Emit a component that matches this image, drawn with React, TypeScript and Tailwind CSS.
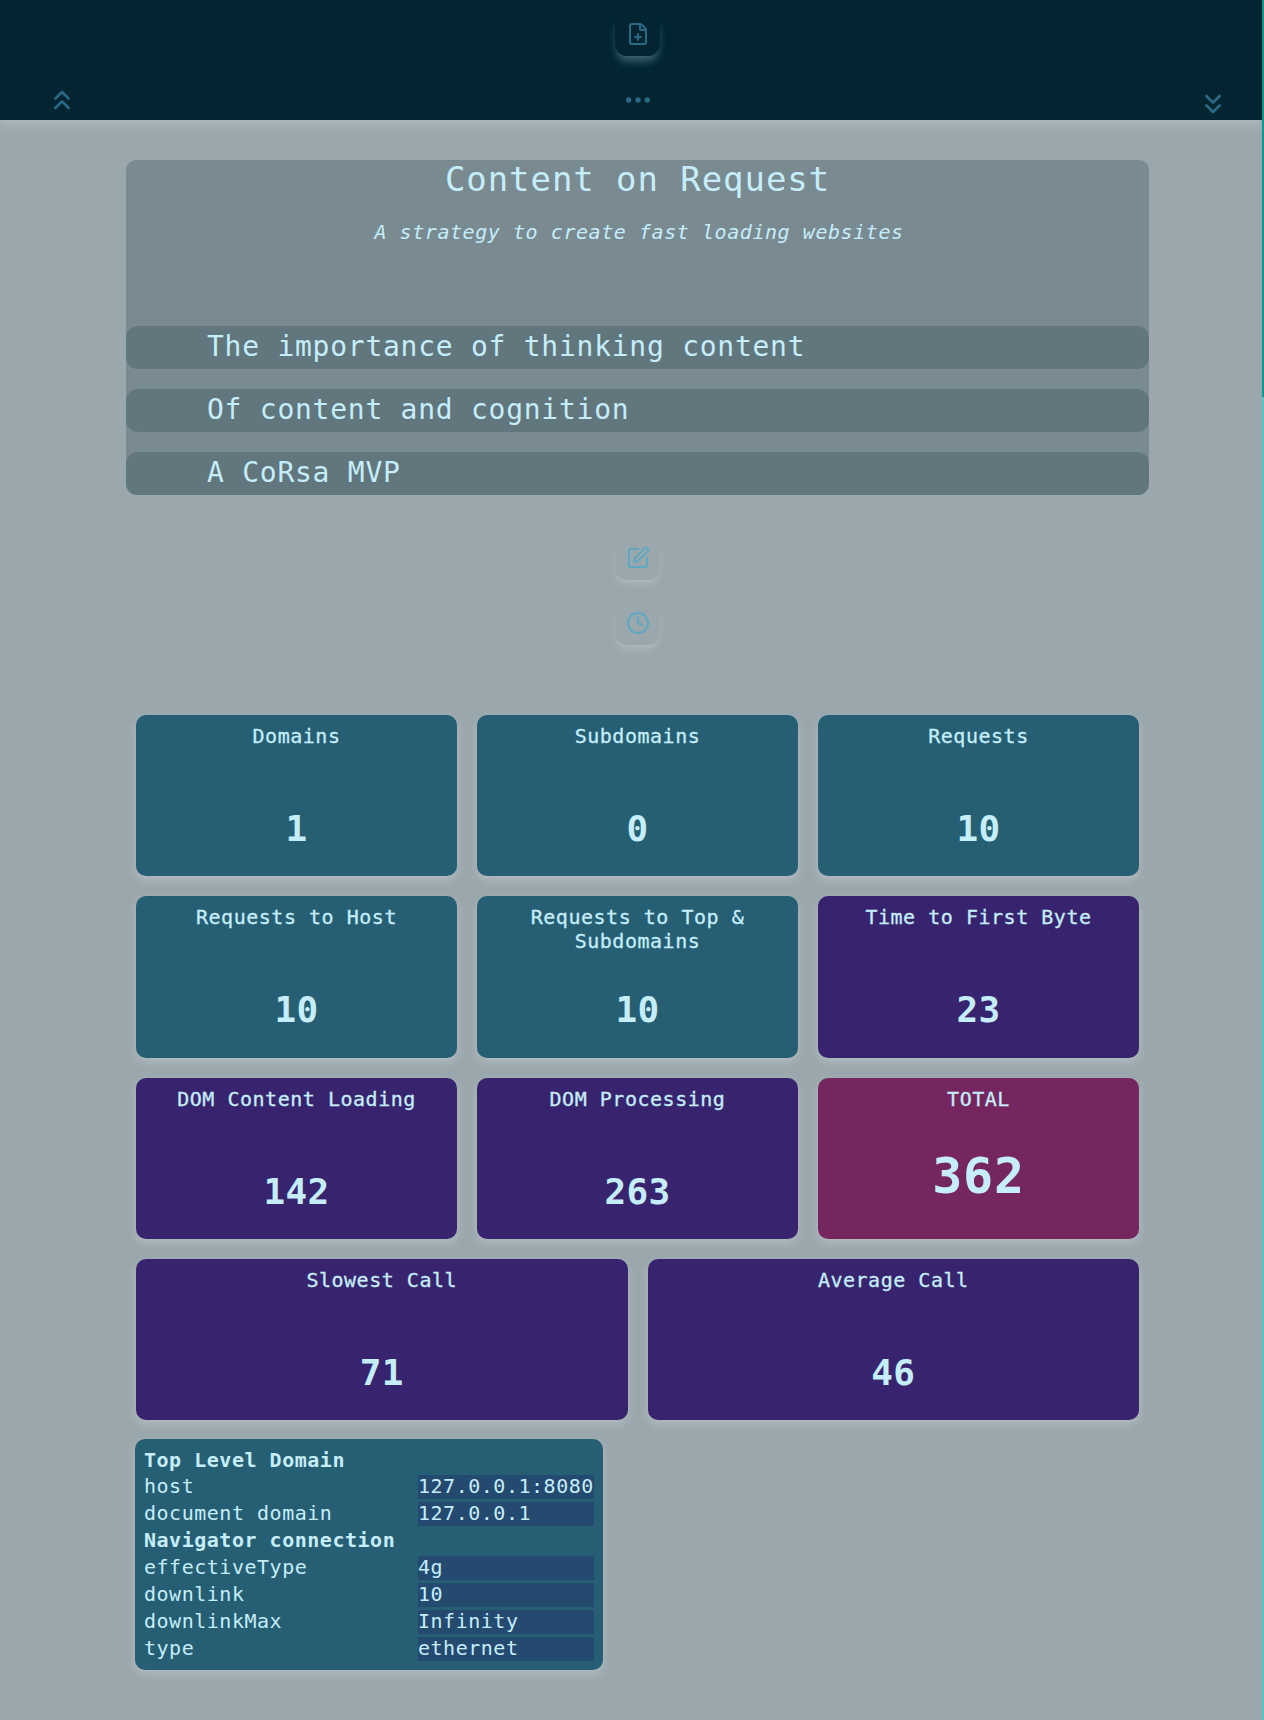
import React from 'react';
import { ChevronsUp, ChevronsDown, Ellipsis, FilePlus, SquarePen, Clock } from 'lucide-react';

const TEAL = 'bg-[#265f73]';
const PURPLE = 'bg-[#38246e]';

const Stat: React.FC<{ label: string; value: string; color?: string; big?: boolean }> = ({ label, value, color = TEAL, big }) => (
  <div className={`h-[161.3px] rounded-[10px] ${color} flex flex-col items-center pt-[9px] px-4 text-center shadow-[0_4px_10px_rgba(255,255,255,0.25)]`}>
    <div className="min-h-12 text-[20px] leading-6 tracking-[0.52px] [-webkit-text-stroke:0.3px_#c5edfb]">{label}</div>
    {big ? (
      <div className="mt-[9px] text-[50px] leading-[64px] font-bold tracking-[0.8px]">{value}</div>
    ) : (
      <div className="mt-[33px] text-[36px] leading-[48px] font-bold tracking-[0.3px]">{value}</div>
    )}
  </div>
);

const GhostButton: React.FC<{ children: React.ReactNode; dark?: boolean }> = ({ children, dark }) => (
  <div className={`w-[45px] h-11 rounded-[12px] flex items-center justify-center ${dark ? 'shadow-[0_7px_8px_-2px_rgba(160,200,210,0.4)] bg-[#022531]' : 'shadow-[0_5px_6px_-1px_rgba(255,255,255,0.2)] bg-[#9aa7ad]'}`}>
    {children}
  </div>
);

const InfoRow: React.FC<{ name: string; value: string }> = ({ name, value }) => (
  <>
    <div className="h-6 leading-[22px]">{name}</div>
    <div className="h-6 leading-[22px] bg-[#254a70]">{value}</div>
  </>
);

export default function App() {
  return (
    <div className="min-h-[1720px] bg-[#9aa7ad] text-[#c5edfb] font-['DejaVu_Sans_Mono','Liberation_Mono',monospace] relative overflow-hidden">
      <header className="h-[120px] bg-[#022531] flex items-start justify-between pl-[46px] pr-[35px] shadow-[0_4px_12px_rgba(255,255,255,0.25)] relative">
        <ChevronsUp className="mt-[84px] w-8 h-8 text-[#2a6a85]" />
        <div className="w-[45px] flex flex-col items-center pt-3">
          <GhostButton dark><FilePlus className="w-6 h-6 text-[#2a6a85]" /></GhostButton>
          <Ellipsis className="mt-7 w-8 h-8 text-[#2a6a85]" />
        </div>
        <ChevronsDown className="mt-[88px] w-8 h-8 text-[#2a6a85]" />
      </header>

      <div className="w-[1023px] ml-[126px] mt-10 flex flex-col items-center">
        <section className="w-full h-[335px] bg-[#7a8a91] rounded-[10px] flex flex-col">
          <h1 className="-mt-px text-center text-[34px] leading-10 tracking-[0.93px]">Content on Request</h1>
          <p className="pl-[3px] text-center italic text-[20px] leading-6 tracking-[0.56px] mt-[21px]">A strategy to create fast loading websites</p>
          <div className="mt-[82px] flex flex-col gap-5">
            {['The importance of thinking content', 'Of content and cognition', 'A CoRsa MVP'].map(t => (
              <div key={t} className="h-[43px] bg-[#61767d] rounded-[12px] pl-[81px] text-[28px] leading-[42px] tracking-[0.74px]">{t}</div>
            ))}
          </div>
        </section>

        <div className="flex flex-col items-center gap-[21px] mt-[41px]">
          <GhostButton><SquarePen className="w-6 h-6 text-[#5fa8c2]" /></GhostButton>
          <GhostButton><Clock className="w-6 h-6 text-[#5fa8c2]" /></GhostButton>
        </div>
      </div>

      <main className="ml-[136px] w-[1003px] mt-[70px] flex flex-col gap-5">
        <div className="grid grid-cols-3 gap-5">
          <Stat label="Domains" value="1" />
          <Stat label="Subdomains" value="0" />
          <Stat label="Requests" value="10" />
          <Stat label="Requests to Host" value="10" />
          <Stat label="Requests to Top & Subdomains" value="10" />
          <Stat label="Time to First Byte" value="23" color={PURPLE} />
          <Stat label="DOM Content Loading" value="142" color={PURPLE} />
          <Stat label="DOM Processing" value="263" color={PURPLE} />
          <Stat label="TOTAL" value="362" color="bg-[#75265e]" big />
        </div>
        <div className="grid grid-cols-2 gap-5">
          <Stat label="Slowest Call" value="71" color={PURPLE} />
          <Stat label="Average Call" value="46" color={PURPLE} />
        </div>
        <div className={`w-[468px] -ml-px -mt-px rounded-[10px] ${TEAL} p-[9px] text-[20px] tracking-[0.52px] shadow-[0_4px_10px_rgba(255,255,255,0.25)]`}>
          <div className="grid grid-cols-[274px_1fr] gap-y-[3px]">
            <div className="col-span-2 h-6 leading-6 font-bold">Top Level Domain</div>
            <InfoRow name="host" value="127.0.0.1:8080" />
            <InfoRow name="document domain" value="127.0.0.1" />
            <div className="col-span-2 h-6 leading-[22px] font-bold">Navigator connection</div>
            <InfoRow name="effectiveType" value="4g" />
            <InfoRow name="downlink" value="10" />
            <InfoRow name="downlinkMax" value="Infinity" />
            <InfoRow name="type" value="ethernet" />
          </div>
        </div>
      </main>

      <div className="absolute top-0 right-0 w-[2px] h-[397px] bg-[#0f9a8c]" />
      <div className="absolute top-[397px] right-0 bottom-0 w-[2px] bg-[#55c8c0]" />
    </div>
  );
}
